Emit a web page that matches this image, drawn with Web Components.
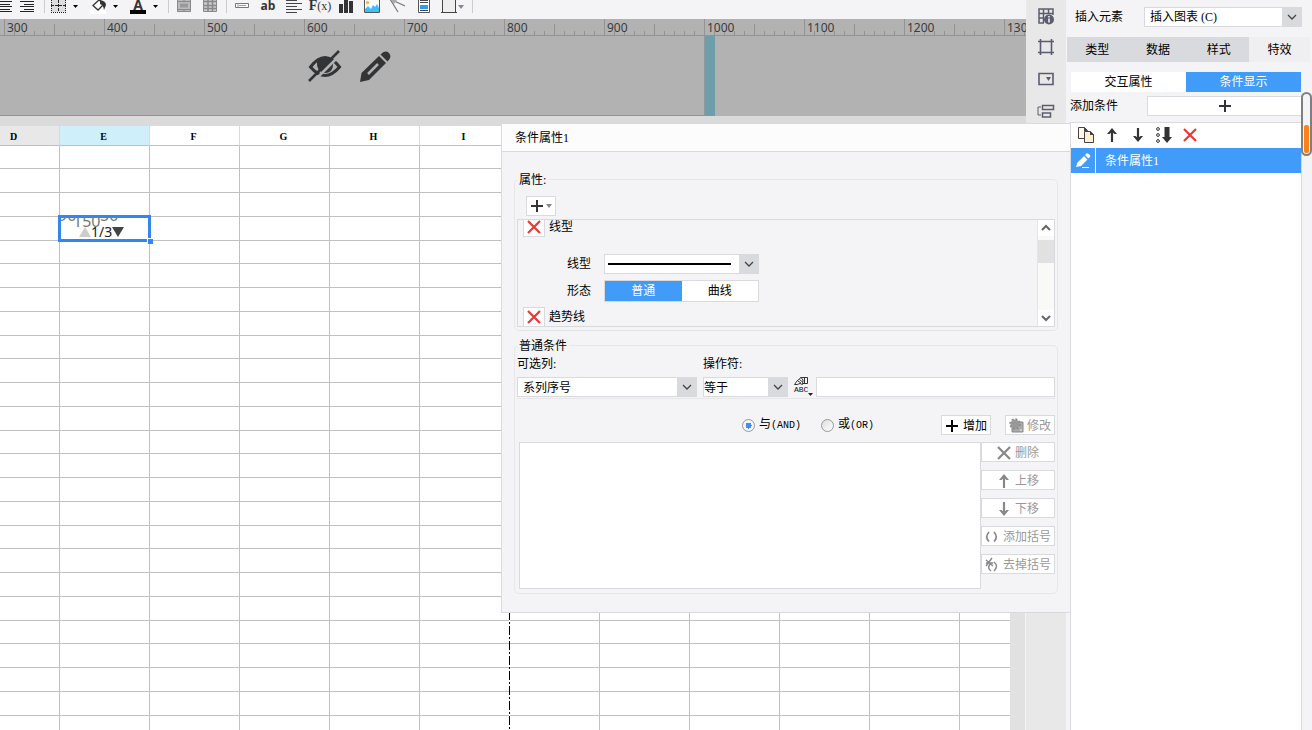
<!DOCTYPE html>
<html lang="zh-CN">
<head>
<meta charset="utf-8">
<meta name="viewport" content="width=device-width, initial-scale=1">
<title>条件属性</title>
<style>
  html, body { height: 100%; margin: 0; }
  body {
    --line: #d9dadd;
    --soft: #e7e7ea;
    --face: #f4f4f7;
    --blue: #409bf9;
    --ink: #333435;
    font: 12px/16px "Liberation Serif", "Noto Sans CJK SC", serif;
    color: #000;
    background: var(--face);
    overflow: hidden;
  }
</style>
</head>
<body>
<report-designer></report-designer>

<script>
const BASE = `
  *, *::before, *::after { box-sizing: border-box; }
  button, select, input { font: inherit; color: inherit; margin: 0; padding: 0; border-radius: 0; }
  button { display: inline-flex; align-items: center; justify-content: center; gap: 4px; background: #fff; border: 1px solid var(--line); white-space: nowrap; }
  button:disabled { color: #999; }
  .mono { font-family: "Liberation Mono", monospace; font-size: 10px; }
  .pick { position: relative; display: block; height: 20px; }
  .pick select { appearance: none; display: block; width: 100%; height: 100%; background: #fff; border: 1px solid var(--line); padding: 0 20px 0 5px; line-height: 16px; outline: none; }
  .pick ui-icon { position: absolute; top: 0; right: 0; width: 20px; height: 20px; background: var(--line); pointer-events: none; }
  .seg { display: flex; }
  .seg button { flex: 1; border: 0; }
  .seg button[aria-pressed="true"] { background: var(--blue); color: #fff; }
`;

const define = (name, html, setup) => {
  const tpl = document.createElement('template');
  tpl.innerHTML = html;
  customElements.define(name, class extends HTMLElement {
    constructor() {
      super();
      this.attachShadow({ mode: 'open' }).append(tpl.content.cloneNode(true));
    }
    connectedCallback() { if (setup) setup(this, this.shadowRoot); }
  });
};

/* name: [width, height, markup] */
const ICONS = {
  chevron: [20, 20, '<path d="M6 8l4 4 4-4" fill="none" stroke="#444" stroke-width="1.3"/>'],
  plus: [14, 14, '<path d="M7 1v12M1 7h12" stroke="currentColor" stroke-width="2"/>'],
  caret: [6, 4, '<path d="M0 0h6L3 4z" fill="#888"/>'],
  cross: [14, 14, '<path d="M1 1l12 12M13 1L1 13" stroke="currentColor" stroke-width="2.2" fill="none"/>'],
  up: [14, 14, '<path d="M7 3v11" stroke="currentColor" stroke-width="2.200"/><path d="M7 0l5 6H9.500L7 4 4.500 6H2z" fill="currentColor"/>'],
  down: [14, 14, '<path d="M7 0v11" stroke="currentColor" stroke-width="2.200"/><path d="M7 14l5-6H9.500L7 10 4.500 8H2z" fill="currentColor"/>'],
  brackets: [14, 14, '<path d="M4 2Q-.5 7 4 11.500M9 2q4.500 5 0 9.500" fill="none" stroke="currentColor" stroke-width="1.700"/>'],
  unbracket: [14, 14, '<path d="M1 2l7 6M7 0L1 8M1 5h7M5 6q-3 4 1 7M9 4q5 4 0 9" fill="none" stroke="currentColor" stroke-width="1.400"/>'],
  gearbox: [16, 16, '<path d="M8 4h6v10H3V8z" fill="#aaa" stroke="#888"/><circle cx="6" cy="6" r="4.500" fill="#999"/><circle cx="6" cy="6" r="5" fill="none" stroke="#888" stroke-width="1.500" stroke-dasharray="2 1.900"/><path d="M11 11h2v2h-2z" fill="#ccc"/>'],
  arrowup: [16, 16, '<path d="M4 10l4-4 4 4" fill="none" stroke="#666" stroke-width="2"/>'],
  arrowdown: [16, 16, '<path d="M4 6l4 4 4-4" fill="none" stroke="#666" stroke-width="2"/>'],
  copy: [18, 16, '<path d="M1.500.5h6l3 3v8h-9z" fill="#fff8ea" stroke="#444"/><path d="M7.500 4.500h6l3 3v8h-9z" fill="#ffefd2" stroke="#444"/><path d="M13 4l4 4h-4zM7 0l4 4H7z" fill="#444"/>'],
  sort: [16, 16, '<g fill="none" stroke="#333"><circle cx="2" cy="2" r="1.400"/><circle cx="2" cy="8" r="1.400"/><circle cx="2" cy="14" r="1.400"/></g><path d="M8.500 0h5v10H16l-5 6-5-6h2.500z" fill="#333"/>'],
  edit: [16, 16, '<path d="M1 14l1.500-4.500L9 3l3.500 3.500L6 13z M10 2l1.500-1.500q1-.8 2 .2l1.300 1.300q1 1 .2 2L13.500 5.500z" fill="#fff"/><path d="M7 14.500h7" stroke="#fff"/>'],
  abc: [20, 20, '<path d="M6.500.5h7v6h-5M10.500.5v6" fill="none" stroke="#333"/><path d="M.5 7.500L3 4l4-3.500L9 3l-.5 4.500L6 6.500l-3 1z" fill="#fff" stroke="#333"/><path d="M4 4l3 2M5.500 2.500l3 2.500" stroke="#333"/><path d="M14 16h5l-2.500 3z" fill="#222"/>'],
  eyeoff: [32, 32, '<path d="M1.500 17Q16-2 30.500 17 16 34 1.500 17z" fill="none" stroke="#333435" stroke-width="3"/><path d="M8 11q8-6 16 0 1 12-8 12-9-1-8-12z" fill="#333435"/><path d="M3 33L33 3" stroke="#b2b2b2" stroke-width="2.500"/><path d="M0 31L30 1" stroke="#333435" stroke-width="2.500"/>'],
  pencil: [31, 31, '<path d="M0 31l1.500-9L19 5l7 7L9 29z" fill="#333435"/><path d="M8 23L18 13" stroke="#b2b2b2" stroke-width="2.500"/><path d="M20.500 3.500q4.500-5 8.500-1.500 3.500 4-1.500 8.500z" fill="#333435"/>'],
  gridinfo: [18, 18, '<g fill="none" stroke="#5b5d6e" stroke-width="1.500"><path d="M16 8V2H2v14h5M2 6.500h14M2 11h4M6.500 2v14M11.500 2v4"/></g><circle cx="12" cy="12.500" r="5" fill="#5b5d6e"/><path d="M12 9v1.500M12 11.500v4" stroke="#e8e8e8" stroke-width="1.700"/>'],
  frame: [18, 18, '<path d="M3.500 1v16M14.500 1v16M1 3.500h16M1 14.500h16" stroke="#5b5d6e" stroke-width="1.600" fill="none"/>'],
  dropdown: [18, 18, '<path d="M2 3.500h14v11H2z" fill="none" stroke="#5b5d6e" stroke-width="1.600"/><path d="M9 7h5l-2.500 4z" fill="#5b5d6e"/>'],
  tree: [18, 18, '<g fill="none" stroke="#5b5d6e" stroke-width="1.500"><path d="M5.500 3.500h11v4h-11zM5.500 11h8v4h-8z"/><path d="M4 5H1v8h3" stroke-width="1"/></g>'],
  /* toolbar glyphs share the toolbar's height */
  aligncenter: [22, 19, '<path d="M4 1.500h14M6 4.500h10M4 6.500h14M6 9.500h10M4 11.500h14" stroke="#222"/>'],
  alignright: [22, 19, '<path d="M4 1.500h14M8 4.500h10M4 6.500h14M8 9.500h10M4 11.500h14" stroke="#222"/>'],
  borders: [40, 19, '<path d="M3 0h15v12H3z" fill="#ddd"/><path d="M3.500 0v13M17.500 0v13M3 12.500h15" stroke="#222" stroke-dasharray="1 1"/><path d="M10.500 0v12M3 5.500h15" stroke="#222" stroke-dasharray="3 1"/><path d="M25 5h5l-2.500 3z"/>'],
  bucket: [40, 19, '<path d="M2 10h16v4H2z" fill="#fff"/><path d="M5 5.500L11 0l5 4-6 6z" fill="#fff" stroke="#333" stroke-width="1.300"/><path d="M12 0q6 1 6 5l-2 5q-.5-5-4-6z" fill="#333"/><path d="M25 5h5l-2.500 3z"/>'],
  fontcolor: [20, 19, '<path d="M5 5h5l-2.500 3z"/>'],
  merge: [26, 19, '<path d="M6.500-1h13v12.500h-13z" fill="#bbb" stroke="#888"/><path d="M6 1.500h14M6 9.500h14M13 0v2M13 9v3" stroke="#888"/><path d="M9 3.500h8v4H9z" fill="#999"/>'],
  cells: [26, 19, '<path d="M6.500-1h13v12.500h-13z" fill="#ccc" stroke="#888"/><path d="M6 1.500h14M6 5.500h14M6 8.500h14M11 0v12M15.500 0v12" stroke="#888" stroke-width="1.500"/>'],
  field: [26, 19, '<path d="M6.500 3.500h13v4h-13z" fill="#fff" stroke="#777"/><path d="M9 3v4M10 5.500h7" stroke="#999"/>'],
  paragraph: [26, 19, '<path d="M5 .5h11M5 3.500h16M5 6.500h11M5 9.500h16M5 12.500h11" stroke="#444"/>'],
  bars: [26, 19, '<path d="M6 4h4v9H6zM11-1h4v14h-4zM16 1h4v12h-4z" fill="#333"/>'],
  picture: [26, 19, '<path d="M5-1h16v14H5z" fill="#fff"/><path d="M5.500-1v13.500h15V-1" fill="none" stroke="#555"/><circle cx="8.500" cy="2.500" r="1.700" fill="#fb3"/><path d="M6 12V9l3-3 3 3 2-4 2 2 2-3 2 4v4z" fill="#3cc0f8"/>'],
  slash: [26, 19, '<path d="M5-1l15 7M5-1l8 13" stroke="#777" fill="none" stroke-width="1.200"/><path d="M5-1l7 1-3 4z" fill="#aaa"/>'],
  report: [26, 19, '<path d="M7.500-1h11v13.500h-11z" fill="#fff" stroke="#555"/><path d="M9 .5h8M9 2.500h8M9 10.500h8" stroke="#444"/><path d="M9 5h8v4H9z" fill="#299df0"/>'],
  box: [36, 19, '<path d="M6 0h12v12H6z" fill="#eee"/><path d="M5.500-2v14.500M18.500-2v14.500M4 12.500h16" stroke="#444" fill="none"/><path d="M21 5h6l-3 4z" fill="#888"/>'],
};

define('ui-icon', `<style>
  :host { display: inline-flex; flex: none; align-items: center; justify-content: center; }
  svg { display: block; overflow: visible; }
</style>`, (el, root) => {
  if (root.querySelector('svg')) return;
  const [w, h, body] = ICONS[el.getAttribute('name')];
  root.innerHTML += `<svg width="${w}" height="${h}" viewBox="0 0 ${w} ${h}" aria-hidden="true">${body}</svg>`;
});

define('main-toolbar', `<style>${BASE}
  :host { display: flex; height: 19px; overflow: hidden; background: var(--face); }
  .bar { display: flex; margin-left: -6px; }
  button { width: 26px; height: 19px; border: 0; background: none; justify-content: flex-start; gap: 0; overflow: visible; }
  .narrow button { width: 22px; }
  .wide button { width: 40px; }
  .bar > div { display: flex; }
  i { width: 1px; height: 13px; background: #ccc; margin: 0 2px 0 3px; }
  i.a { margin: 0 3px 0 6px; }
  i.b { margin-left: 0; }
  i.c { margin-left: 9px; }
  .ab { justify-content: center; font: bold 12px/12px "Open Sans", sans-serif; color: var(--ink); padding-bottom: 7px; }
  .fx { justify-content: center; font: bold 14px/12px "Liberation Serif", serif; color: var(--ink); padding-bottom: 7px; }
  .fx small { font: 12px/12px "Liberation Serif", serif; }
  .a-color span { width: 16px; height: 14px; margin: 0 2px; font: bold 14px/10px "Open Sans", sans-serif; border-bottom: 4px solid #000; align-self: flex-start; color: var(--ink); }
</style>
<div class="bar" role="toolbar">
  <div class="narrow"><button aria-label="居中"><ui-icon name="aligncenter"></ui-icon></button><button aria-label="右对齐"><ui-icon name="alignright"></ui-icon></button></div><i class="a"></i>
  <div class="wide"><button aria-label="边框"><ui-icon name="borders"></ui-icon></button><button aria-label="填充"><ui-icon name="bucket"></ui-icon></button><button class="a-color"><span>A</span><ui-icon name="fontcolor"></ui-icon></button></div><i class="b"></i>
  <div><button aria-label="合并"><ui-icon name="merge"></ui-icon></button><button aria-label="拆分"><ui-icon name="cells"></ui-icon></button></div><i></i>
  <div>
    <button aria-label="控件"><ui-icon name="field"></ui-icon></button><button class="ab">ab</button>
    <button aria-label="段落"><ui-icon name="paragraph"></ui-icon></button><button class="fx">F<small>(x)</small></button>
    <button aria-label="图表"><ui-icon name="bars"></ui-icon></button><button aria-label="图片"><ui-icon name="picture"></ui-icon></button>
    <button aria-label="斜线"><ui-icon name="slash"></ui-icon></button><button aria-label="报表"><ui-icon name="report"></ui-icon></button>
    <button aria-label="悬浮"><ui-icon name="box"></ui-icon></button>
  </div><i class="c"></i>
</div>`);

define('scale-ruler', `<style>
  :host { display: flex; box-sizing: border-box; height: 17px; padding-left: 4px; overflow: hidden; background: #b2b2b2; border-bottom: 1px solid #939393; }
  span {
    flex: 0 0 100px; padding-left: 3px; box-sizing: border-box;
    font: 12px/18px "Noto Sans", sans-serif; color: #3c3c3c;
    height: 16px;
    background:
      linear-gradient(#939393, #939393) 0 0 / 1px 100% no-repeat,
      linear-gradient(#939393, #939393) 50px 100% / 1px 11px no-repeat,
      linear-gradient(90deg, #939393 1px, transparent 1px) 0 100% / 10px 4px repeat-x;
  }
</style>`, (el, root) => {
  for (let n = 300; n <= 1300; n += 100) {
    const s = document.createElement('span');
    s.textContent = n;
    root.append(s);
  }
});

define('body-band', `<style>
  :host { display: flex; height: 80px; background: #b2b2b2; }
  .canvas { flex: 0 0 704px; box-sizing: border-box; display: flex; justify-content: center; gap: 19px; padding: 14px 5px 0 0; border-bottom: 1px solid #939393; }
  .canvas ui-icon { height: 32px; }
  .edge { flex: 0 0 11px; background: #6f9eab; border-left: 1px solid #8b9a9e; box-sizing: border-box; }
</style>
<div class="canvas"><ui-icon name="eyeoff"></ui-icon><ui-icon name="pencil"></ui-icon></div><div class="edge"></div>`);

define('chart-thumb', `<style>
  :host { position: absolute; z-index: 1; top: -2px; left: -2px; right: -2px; bottom: -2px; border: 3px solid #3385f0; background: #fff; font: 14px/16px "Noto Sans", sans-serif; }
  .clip { position: absolute; inset: 0; overflow: hidden; }
  .tick { position: absolute; color: #777; font-size: 16px; }
  .pager { position: absolute; left: 18px; top: 6px; display: flex; align-items: center; color: #222; }
  .pager b { border: 6px solid transparent; border-top: 0; border-bottom: 10px solid #ccc; }
  .pager b + span + b { border-bottom: 0; border-top: 10px solid #444; }
  .knob { position: absolute; right: -5px; bottom: -5px; width: 6px; height: 6px; box-sizing: border-box; background: #3385f0; border: 1px solid #fff; border-width: 1px 0 0 1px; }
</style>
<div class="clip"><span class="tick" style="left:-3px;top:-11px">90</span><span class="tick" style="left:12px;top:-5px">150</span><span class="tick" style="left:39px;top:-11px">50</span>
<div class="pager"><b></b><span>1/3</span><b></b></div></div><div class="knob"></div>`);

define('cell-sheet', `<style>
  :host { flex: 1; min-height: 0; display: flex; background: var(--face); }
  .view { position: relative; flex: 1; overflow: hidden; background: #fff; }
  table { table-layout: fixed; width: 1080px; margin-left: -30px; border-collapse: separate; border-spacing: 0; }
  th, td { box-sizing: border-box; padding: 0; border-right: 1px solid #c0c0c0; border-bottom: 1px solid #c0c0c0; }
  th { height: 20px; font: bold 10px/16px "Liberation Serif", serif; border-right-color: #d9d9d9; padding: 3px 2px 0 0; }
  th:first-child { background: #e8e8e8; }
  th.on { background: #cfeffb; }
  td { height: 24px; position: relative; }
  tbody tr:nth-child(4n+1) td { height: 23px; }
  .guide { position: absolute; left: 509px; top: 20px; bottom: 0; width: 1px; background: repeating-linear-gradient(#000 0 9px, #fff 9px 11px, #000 11px 13px, #fff 13px 15px); }
  .bar { flex: 0 0 15px; margin-right: 1px; background: #e1e1e1; }
</style>
<div class="view"><table><thead><tr></tr></thead><tbody></tbody></table><div class="guide"></div></div><div class="bar"></div>`, (el, root) => {
  const cols = ['D', 'E', 'F', 'G', 'H', 'I', '', '', '', '', '', ''];
  root.querySelector('thead tr').innerHTML = cols.map(c => `<th scope="col"${c === 'E' ? ' class="on"' : ''}>${c}</th>`).join('');
  root.querySelector('tbody').innerHTML = Array.from({ length: 26 }, (_, r) =>
    `<tr>${cols.map(c => `<td>${r === 3 && c === 'E' ? '<chart-thumb></chart-thumb>' : ''}</td>`).join('')}</tr>`).join('');
});

define('side-rail', `<style>${BASE}
  :host { display: flex; flex-direction: column; flex: 0 0 40px; background: #e8e8e8; }
  button { border: 0; background: none; height: 32px; }
  button:first-of-type { height: 31px; }
</style>
<button aria-label="单元格属性"><ui-icon name="gridinfo"></ui-icon></button>
<button aria-label="单元格元素"><ui-icon name="frame"></ui-icon></button>
<button aria-label="控件设置"><ui-icon name="dropdown"></ui-icon></button>
<button aria-label="条件属性"><ui-icon name="tree"></ui-icon></button>`);

define('property-panel', `<style>${BASE}
  :host { position: relative; display: flex; flex-direction: column; flex: 0 0 246px; background: var(--face); }
  .row { display: flex; align-items: center; }
  .element { padding: 7px 10px 0 9px; }
  .element label { width: 69px; }
  .pick { flex: 1; }
  .tabs { display: flex; margin: 10px 2px 0 1px; }
  .tabs button { flex: 1; height: 25px; border: 0; background: var(--line); }
  .tabs button[aria-selected="true"] { background: #efeff1; }
  .seg { margin: 10px 11px 0 5px; height: 20px; }
  .add { margin: 4px 10px 0 4px; }
  .add span { width: 77px; }
  .add button { flex: 1; height: 20px; color: var(--ink); }
  .list { flex: 1; margin: 6px 10px 0 4px; background: #fff; border: 1px solid var(--line); border-bottom: 0; }
  .tools { display: flex; padding: 0 0 1px 2px; height: 25px; }
  .tools button { width: 26px; border: 0; background: none; color: var(--ink); }
  .tools .del { color: #e83a35; }
  .item { display: flex; align-items: center; height: 25px; background: var(--blue); color: #fff; }
  .item ui-icon { width: 25px; height: 25px; border-right: 1px solid #fff; margin-right: 9px; }
  .thumb { position: absolute; right: 0; top: 92px; width: 11px; height: 64px; border: 2px solid #7f7f7f; border-radius: 6px; background: #f4f4f7; }
  .thumb::after { content: ""; position: absolute; left: 1px; right: 1px; bottom: 1px; height: 28px; border-radius: 2px; background: #ff8019; }
</style>
<div class="row element"><label for="kind">插入元素</label><div class="pick"><select id="kind"><option>插入图表 (C)</option></select><ui-icon name="chevron"></ui-icon></div></div>
<div class="tabs" role="tablist"><button role="tab">类型</button><button role="tab">数据</button><button role="tab">样式</button><button role="tab" aria-selected="true">特效</button></div>
<div class="seg"><button aria-pressed="false">交互属性</button><button aria-pressed="true">条件显示</button></div>
<div class="row add"><span id="addl">添加条件</span><button aria-labelledby="addl"><ui-icon name="plus"></ui-icon></button></div>
<div class="list">
  <div class="tools"><button aria-label="复制"><ui-icon name="copy"></ui-icon></button><button aria-label="上移"><ui-icon name="up"></ui-icon></button><button aria-label="下移"><ui-icon name="down"></ui-icon></button><button aria-label="排序"><ui-icon name="sort"></ui-icon></button><button class="del" aria-label="删除"><ui-icon name="cross"></ui-icon></button></div>
  <div class="item"><ui-icon name="edit"></ui-icon><span>条件属性1</span></div>
</div>
<div class="thumb"></div>`);

define('group-box', `<style>
  :host { display: block; }
  fieldset { margin: 0; min-width: 0; padding: 0 2px var(--foot, 3px); border: 1px solid var(--soft); border-radius: 5px; }
  legend { box-sizing: border-box; padding: 1px 2px 0; line-height: 16px; height: 16px; }
</style><fieldset><legend><slot name="title"></slot></legend><slot></slot></fieldset>`);

define('condition-dialog', `<style>${BASE}
  :host { position: absolute; z-index: 2; top: 123px; left: 501px; right: 242px; background: var(--face); border: 1px solid var(--line); border-right: 0; box-sizing: border-box; }
  header { height: 28px; padding: 6px 13px 0; background: #fcfcfd; border-bottom: 1px solid var(--line); }
  .content { padding: 19px 12px 18px; }
  .plus { display: flex; width: 30px; height: 20px; margin: 9px 0 3px 9px; gap: 2px; color: var(--ink); }
  .scroll { display: flex; height: 108px; border: 1px solid var(--line); overflow: hidden; }
  .props { flex: 1; padding-left: 5px; margin-top: -3px; }
  .head { display: flex; align-items: center; gap: 4px; }
  .head button { width: 22px; height: 20px; color: #e83a35; }
  .line { display: flex; align-items: center; padding-left: 44px; }
  .line > :first-child { width: 37px; }
  .line .pick { width: 155px; }
  .line .pick::after { content: ""; position: absolute; left: 4px; top: 9px; width: 123px; height: 2px; background: #000; pointer-events: none; }
  .line .seg { width: 155px; height: 22px; border: 1px solid var(--line); }
  .gap { margin-top: 17px; margin-bottom: 6px; }
  .gap2 { margin-bottom: 5px; }
  .bar { display: flex; flex-direction: column; width: 16px; background: #f9f9f7; box-shadow: -1px 0 #e6e6dc; }
  .bar ui-icon { width: 16px; height: 16px; background: #fff; }
  .bar b { height: 23px; margin-top: 4px; background: #e1e1e1; }
  .bar ui-icon:last-child { margin-top: auto; }
  .second { --foot: 4px; display: block; margin-top: 6px; }
  .expr { display: grid; grid-template-columns: 186px 91px 22px 1fr; row-gap: 5px; padding: 3px 0 1px; border-bottom: 1px solid var(--soft); }
  .expr .pick { margin-right: 6px; }
  .expr select { padding-top: 1px; }
  .expr .op select { padding-left: 0; }
  .expr label:nth-of-type(2) { grid-column: span 3; }
  .expr input { height: 20px; width: 100%; border: 1px solid var(--line); background: #fff; }
  .abc { position: relative; border: 0; background: none; width: 20px; height: 20px; }
  .abc span { position: absolute; left: 0; bottom: 3px; font: 8px/8px "Liberation Mono", monospace; color: #111; }
  .join { display: flex; justify-content: flex-end; align-items: center; margin-top: 16px; }
  .join label { display: flex; align-items: center; width: 79px; gap: 4px; }
  .join label + label { width: 120px; }
  .join button { width: 50px; height: 20px; color: #000; padding-top: 1px; }
  .join button + button { margin-left: 14px; gap: 2px; color: #999; }
  input[type=radio] { appearance: none; width: 13px; height: 13px; border: 1px solid #999; border-radius: 50%; background: linear-gradient(135deg, #ddd, #fff); }
  input[type=radio]:checked { background: radial-gradient(#3f8fef 0 3px, #f4f4f4 3px); }
  .bottom { display: flex; margin: 7px 0 0 2px; }
  .box { flex: 1; height: 147px; background: #fff; border: 1px solid var(--line); }
  .acts { display: flex; flex-direction: column; gap: 8px; width: 74px; }
  .acts button { height: 20px; padding-top: 1px; }
  .acts ui-icon { color: #888; }
</style>
<header>条件属性1</header>
<div class="content">
  <group-box><span slot="title">属性:</span>
    <button class="plus" aria-label="添加属性"><ui-icon name="plus"></ui-icon><ui-icon name="caret"></ui-icon></button>
    <div class="scroll">
      <div class="props">
        <div class="head"><button aria-label="删除线型"><ui-icon name="cross"></ui-icon></button><span>线型</span></div>
        <div class="line gap"><label for="stroke">线型</label><div class="pick"><select id="stroke"><option aria-label="实线"></option></select><ui-icon name="chevron"></ui-icon></div></div>
        <div class="line gap2"><span>形态</span><div class="seg"><button aria-pressed="true">普通</button><button aria-pressed="false">曲线</button></div></div>
        <div class="head"><button aria-label="删除趋势线"><ui-icon name="cross"></ui-icon></button><span>趋势线</span></div>
      </div>
      <div class="bar"><ui-icon name="arrowup"></ui-icon><b></b><ui-icon name="arrowdown"></ui-icon></div>
    </div>
  </group-box>
  <group-box class="second"><span slot="title">普通条件</span>
    <div class="expr">
      <label for="col">可选列:</label><label for="op">操作符:</label>
      <div class="pick"><select id="col"><option>系列序号</option></select><ui-icon name="chevron"></ui-icon></div>
      <div class="pick op"><select id="op"><option>等于</option></select><ui-icon name="chevron"></ui-icon></div>
      <button class="abc"><ui-icon name="abc"></ui-icon><span>ABC</span></button>
      <input type="text" aria-label="值">
    </div>
    <div class="join">
      <label><input type="radio" name="j" checked><span>与<span class="mono">(AND)</span></span></label>
      <label><input type="radio" name="j"><span>或<span class="mono">(OR)</span></span></label>
      <button><ui-icon name="plus"></ui-icon>增加</button>
      <button disabled><ui-icon name="gearbox"></ui-icon>修改</button>
    </div>
    <div class="bottom">
      <div class="box" role="listbox" aria-label="条件"></div>
      <div class="acts">
        <button disabled><ui-icon name="cross"></ui-icon>删除</button>
        <button disabled><ui-icon name="up"></ui-icon>上移</button>
        <button disabled><ui-icon name="down"></ui-icon>下移</button>
        <button disabled><ui-icon name="brackets"></ui-icon>添加括号</button>
        <button disabled><ui-icon name="unbracket"></ui-icon>去掉括号</button>
      </div>
    </div>
  </group-box>
</div>`);

define('report-designer', `<style>
  :host { position: relative; display: flex; height: 100vh; overflow: hidden; }
  main { flex: 1; min-width: 0; display: flex; flex-direction: column; }
  .strip { flex: 0 0 10px; background: #dadadb; }
</style>
<main>
  <main-toolbar></main-toolbar>
  <scale-ruler></scale-ruler>
  <body-band></body-band>
  <div class="strip"></div>
  <cell-sheet></cell-sheet>
</main>
<side-rail></side-rail>
<property-panel></property-panel>
<condition-dialog></condition-dialog>`);
</script>
</body>
</html>
